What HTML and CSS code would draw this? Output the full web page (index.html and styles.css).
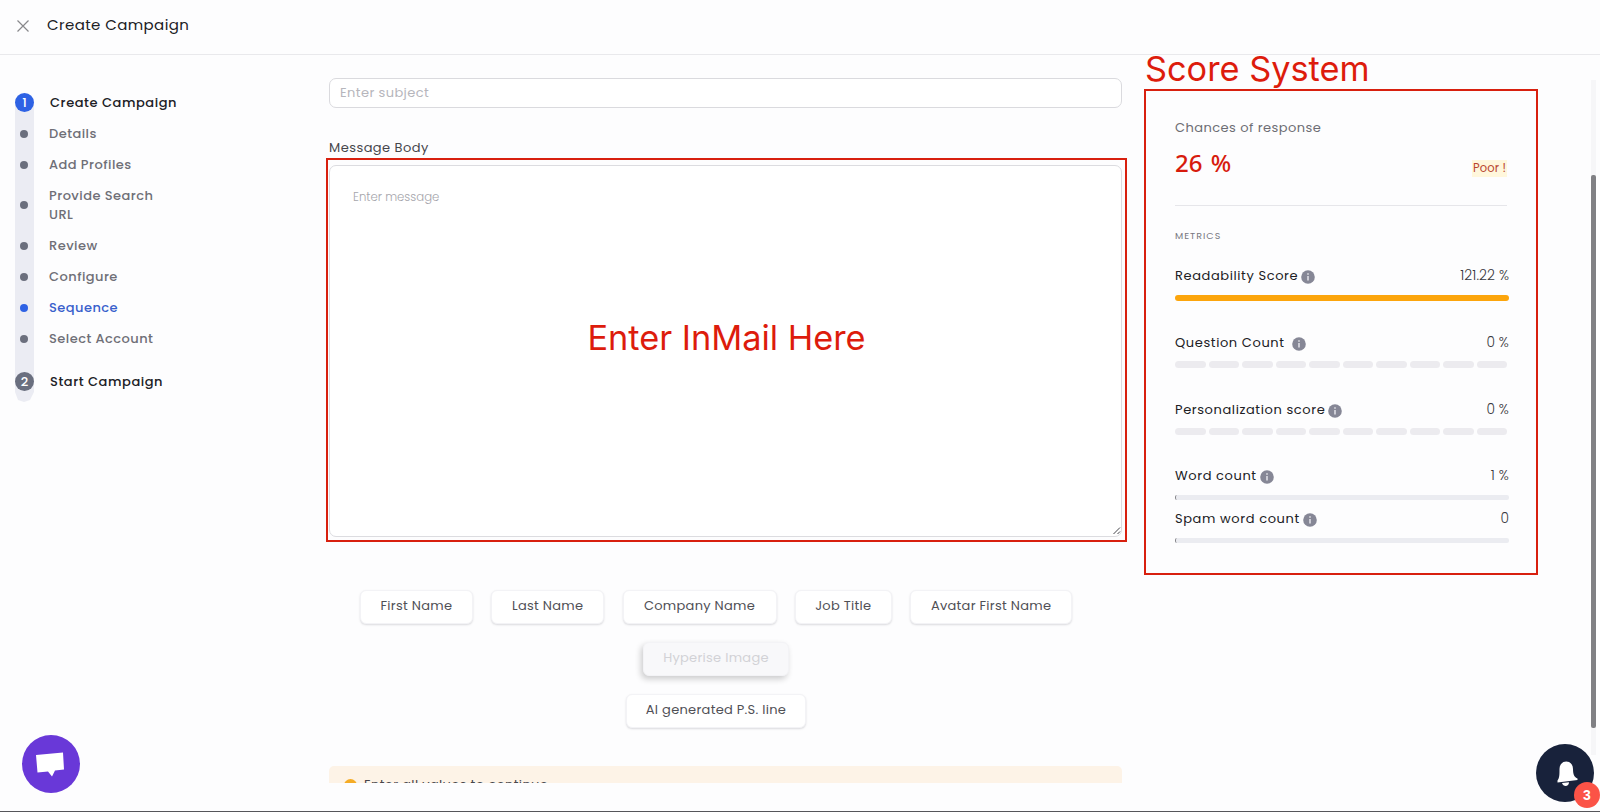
FILE: index.html
```html
<!DOCTYPE html>
<html lang="en">

<head>
    <meta charset="UTF-8">
    <meta name="viewport" content="width=device-width, initial-scale=1.0">
    <title>Create Campaign</title>
    <link rel="stylesheet" href="styles.css">
</head>

<body>
    <header class="header">
        <svg class="close" viewBox="0 0 12 12"><path d="M0.5 0.5L11.5 11.5M11.5 0.5L0.5 11.5"/></svg>
        <h1>Create Campaign</h1>
    </header>

    <div class="layout">
        <!-- Steps -->
        <nav class="steps">
            <div class="step main"><i class="num active">1</i><span>Create Campaign</span></div>
            <div class="step"><i class="dot"></i><span>Details</span></div>
            <div class="step"><i class="dot"></i><span>Add Profiles</span></div>
            <div class="step"><i class="dot"></i><span>Provide Search<br>URL</span></div>
            <div class="step"><i class="dot"></i><span>Review</span></div>
            <div class="step"><i class="dot"></i><span>Configure</span></div>
            <div class="step current"><i class="dot"></i><span>Sequence</span></div>
            <div class="step"><i class="dot"></i><span>Select Account</span></div>
            <div class="step main last"><i class="num">2</i><span>Start Campaign</span></div>
        </nav>

        <!-- Message form -->
        <main class="editor">
            <input class="subject" type="text" placeholder="Enter subject">
            <label class="label">Message Body</label>
            <div class="message-wrap">
                <div class="message">Enter message
                    <svg class="resize" viewBox="0 0 8 8"><path d="M0.5 7L7 0.5M4.5 7L7 4.5"/></svg>
                </div>
                <div class="mark mark-message">Enter InMail Here</div>
            </div>

            <div class="chips">
                <div class="chip-row">
                    <button class="chip">First Name</button>
                    <button class="chip">Last Name</button>
                    <button class="chip company">Company Name</button>
                    <button class="chip job">Job Title</button>
                    <button class="chip avatar">Avatar First Name</button>
                </div>
                <div class="chip-row">
                    <button class="chip disabled">Hyperise Image</button>
                </div>
                <div class="chip-row">
                    <button class="chip ai">AI generated P.S. line</button>
                </div>
            </div>

            <div class="alert"><i class="alert-icon"></i><span>Enter all values to continue</span></div>
        </main>

        <!-- Score panel -->
        <aside class="score">
            <div class="mark-title">Score System</div>
            <div class="card">
                <p class="chances">Chances of response</p>
                <div class="result"><span class="percent">26 %</span><span class="poor">Poor !</span></div>
                <p class="metrics">METRICS</p>

                <div class="metric">
                    <div class="metric-head"><span>Readability Score</span><svg class="info" viewBox="0 0 14 14"><circle cx="7" cy="7" r="6.8"/><path d="M7 6V10.5M7 3.3V4.7"/></svg><b>121.22 %</b></div>
                    <div class="bar full"></div>
                </div>
                <div class="metric question">
                    <div class="metric-head"><span>Question Count</span><svg class="info" viewBox="0 0 14 14"><circle cx="7" cy="7" r="6.8"/><path d="M7 6V10.5M7 3.3V4.7"/></svg><b>0 %</b></div>
                    <div class="segments"><i></i><i></i><i></i><i></i><i></i><i></i><i></i><i></i><i></i><i></i></div>
                </div>
                <div class="metric personal">
                    <div class="metric-head"><span>Personalization score</span><svg class="info" viewBox="0 0 14 14"><circle cx="7" cy="7" r="6.8"/><path d="M7 6V10.5M7 3.3V4.7"/></svg><b>0 %</b></div>
                    <div class="segments"><i></i><i></i><i></i><i></i><i></i><i></i><i></i><i></i><i></i><i></i></div>
                </div>
                <div class="metric words">
                    <div class="metric-head"><span>Word count</span><svg class="info" viewBox="0 0 14 14"><circle cx="7" cy="7" r="6.8"/><path d="M7 6V10.5M7 3.3V4.7"/></svg><b>1 %</b></div>
                    <div class="bar"></div>
                </div>
                <div class="metric spam">
                    <div class="metric-head"><span>Spam word count</span><svg class="info" viewBox="0 0 14 14"><circle cx="7" cy="7" r="6.8"/><path d="M7 6V10.5M7 3.3V4.7"/></svg><b>0</b></div>
                    <div class="bar"></div>
                </div>
            </div>
        </aside>

        <div class="scrollbar"><div class="thumb"></div></div>
    </div>

    <!-- Floating buttons -->
    <button class="chat">
        <svg viewBox="0 0 58 58"><path d="M14 20L41 17.5L42 34.5L33 35.5L30 41.5L26 36.5L15.5 37.5Z"/></svg>
    </button>
    <button class="bell">
        <svg viewBox="0 0 58 58"><path d="M23.5 25C23.5 15 37 15 37 25C37 31 38.500 33 41.500 34.500V36L21.500 38.500V36.500C23.500 34 23.500 31 23.500 25Z"/><path d="M26 39L33 38.200C33 43 27 43 26 39Z"/></svg>
        <span class="count">3</span>
    </button>
</body>

</html>
```
FILE: styles.css
```css
/* Global Styles */
* {
    box-sizing: border-box;
}

body {
    margin: 0;
    height: 812px;
    overflow: hidden;
    position: relative;
    background: #fdfdfe;
    border-bottom: 1px solid #55555a;
    font-family: 'Poppins', 'Inter', sans-serif;
    font-size: 13px;
    color: #202024;
}

p,
h1 {
    margin: 0;
}

.header {
    height: 55px;
    border-bottom: 1px solid #e9e9ec;
    display: flex;
    align-items: center;
    padding: 0 0 5px 17px;
}

.header h1 {
    font-size: 15px;
    font-weight: 400;
    letter-spacing: 0.4px;
    margin-left: 18px;
}

.close {
    width: 12px;
    height: 12px;
    margin-top: 2px;
    fill: none;
    stroke: #88888c;
    stroke-width: 1.2;
}

.layout {
    display: flex;
    height: 728px;
    overflow: hidden;
}

/* Steps */
.steps {
    width: 179px;
    height: 309px;
    margin: 38px 135px 0 15px;
    background: linear-gradient(#ebecf3, #ebecf3) no-repeat 0 10px / 19px 100%;
    clip-path: polygon(0 0, 100% 0, 100% 100%, 19px 100%, 19px 299px, 15px 307px, 9px 309px, 3px 307px, 0 299px);
}

.step {
    display: flex;
    align-items: center;
    margin-bottom: 12px;
    color: #6f6f77;
    font-weight: 500;
    line-height: 19px;
    letter-spacing: 0.45px;
}

.step span {
    margin-left: 15px;
}

.step.main {
    color: #202025;
    letter-spacing: 0.55px;
}

.step.main span {
    margin-left: 16px;
}

.step.last {
    margin-top: 24px;
}

.step.current {
    color: #3960cc;
}

.num {
    width: 19px;
    height: 19px;
    border-radius: 50%;
    background: #6a6f7f;
    color: white;
    font-style: normal;
    text-align: center;
    letter-spacing: 0;
}

.num.active {
    background: #2e62e4;
}

.dot {
    width: 8px;
    height: 8px;
    margin: 0 6px 0 5px;
    border-radius: 50%;
    background: #6b6f7d;
}

.current .dot {
    background: #2e62e4;
}

/* Message form */
.editor {
    width: 793px;
    flex-shrink: 0;
    padding-top: 23px;
}

.subject {
    display: block;
    width: 100%;
    height: 30px;
    padding: 0 10px 1px;
    border: 1px solid #dadade;
    border-radius: 7px;
    background: white;
    font: inherit;
    letter-spacing: 0.4px;
}

.subject::placeholder {
    color: #b6b6bc;
}

.label {
    display: block;
    margin-top: 30px;
    line-height: 20px;
    letter-spacing: 0.45px;
    color: #46464b;
}

.message-wrap {
    position: relative;
    margin-top: 7px;
}

.message {
    height: 372px;
    padding: 24px 23px;
    border: 1px solid #dcdce0;
    border-radius: 7px;
    background: white;
    font-size: 11.7px;
    font-weight: 300;
    line-height: 15px;
    color: #a5a5ab;
}

.resize {
    position: absolute;
    right: 1px;
    bottom: 2px;
    width: 8px;
    height: 8px;
    fill: none;
    stroke: #44444a;
}

/* Red marks */
.mark {
    border: 2px solid #d8200f;
    color: #dd1c0c;
    font: 34.3px/40px 'Inter', sans-serif;
}

.mark-message {
    position: absolute;
    top: -7px;
    left: -3px;
    width: 801px;
    height: 384px;
    padding: 158px 0 0 0;
    text-align: center;
}

.mark-title {
    height: 34px;
    padding-left: 1px;
    color: #dd1c0c;
    font: 34.3px/28px 'Inter', sans-serif;
}

/* Chips */
.chips {
    display: grid;
    gap: 18px;
    margin: 53px 19px 0 0;
}

.chip-row {
    display: flex;
    justify-content: center;
    gap: 18.3px;
}

.chip {
    width: 113px;
    height: 34px;
    padding: 0 0 2px;
    border: 1px solid #f3f3f6;
    border-radius: 6px;
    background: white;
    box-shadow: 0 1px 2px rgba(60, 60, 75, 0.18);
    font: inherit;
    letter-spacing: 0.28px;
    white-space: nowrap;
    color: #505056;
}

.chip.company {
    width: 154px;
}

.chip.job {
    width: 97px;
}

.chip.avatar {
    width: 162px;
}

.chip.ai {
    width: 180px;
}

.chip.disabled {
    width: 146px;
    background: #f8f8fa;
    box-shadow: -2px 3px 6px rgba(0, 0, 0, 0.2);
    color: #d2d2d6;
}

.alert {
    display: flex;
    align-items: center;
    height: 38px;
    margin-top: 38px;
    padding: 0 15px;
    border-radius: 5px;
    background: #fdf3e7;
    letter-spacing: 0.35px;
    color: #46464b;
}

.alert-icon {
    width: 13px;
    height: 13px;
    margin-right: 7px;
    border-radius: 50%;
    background: #f5ac26;
}

/* Score panel */
.score {
    width: 394px;
    flex-shrink: 0;
    margin-left: 22px;
}

.card {
    height: 486px;
    padding: 27px 27px 0 29px;
    border: 2px solid #d8200f;
}

.chances {
    line-height: 20px;
    letter-spacing: 0.45px;
    color: #6d6d74;
}

.result {
    display: flex;
    justify-content: space-between;
    align-items: center;
    height: 68px;
    margin-right: 2px;
    padding-bottom: 18px;
    border-bottom: 1px solid #e6e6ea;
}

.percent {
    font: 500 24px 'Noto Sans', sans-serif;
    word-spacing: 2px;
    color: #d71b0d;
}

.poor {
    margin-top: 11px;
    padding: 0 1px;
    background: #fff7dc;
    font-size: 11.5px;
    line-height: 17px;
    letter-spacing: 0.15px;
    color: #b9452f;
}

.metrics {
    margin-top: 24px;
    font-size: 9.5px;
    line-height: 12px;
    letter-spacing: 1px;
    color: #77777e;
}

.metric {
    margin-top: 24px;
}

.metric-head {
    display: flex;
    align-items: center;
    height: 20px;
    letter-spacing: 0.6px;
}

.metric-head b {
    margin-left: auto;
    font-size: 13.8px;
    font-weight: 300;
    letter-spacing: 0.1px;
    color: #37373c;
}

.info {
    width: 14px;
    height: 14px;
    margin: 2px 0 0 3px;
    fill: #868796;
}

.info path {
    stroke: #e4e4ea;
    stroke-width: 1.5;
}

.question .info {
    margin-left: 7px;
}

.bar {
    height: 5px;
    margin-top: 9px;
    border-left: 1px solid #85858a;
    border-radius: 2px;
    background: #ebecf1;
}

.bar.full {
    height: 6px;
    border: none;
    border-radius: 3px;
    background: #fca50c;
}

.question {
    margin-top: 32px;
}

.personal {
    margin-top: 32px;
}

.segments {
    display: grid;
    grid-template-columns: repeat(10, 1fr);
    gap: 3px;
    margin: 8px 2px 0 0;
}

.segments i {
    height: 7px;
    border-radius: 4px;
    background: #ecebef;
}

.words {
    margin-top: 31px;
}

.spam {
    margin-top: 9px;
}

/* Scrollbar */
.scrollbar {
    width: 5px;
    height: 675px;
    margin: 25px 4px 0 auto;
    padding-top: 95px;
    background: #f6f6f8;
}

.thumb {
    height: 553px;
    border-radius: 2px;
    background: #808084;
}

/* Floating buttons */
.chat,
.bell {
    position: absolute;
    width: 58px;
    height: 58px;
    padding: 0;
    border: none;
    border-radius: 50%;
}

.chat {
    left: 21.5px;
    top: 735px;
    background: #6938d8;
    fill: white;
}

.bell {
    left: 1536px;
    top: 744px;
    background: #18223b;
    fill: white;
}

.count {
    position: absolute;
    left: 38px;
    top: 38px;
    width: 26px;
    height: 26px;
    border-radius: 50%;
    background: #fb5347;
    color: white;
    font: bold 14px/26px 'Liberation Sans', sans-serif;
}
```
